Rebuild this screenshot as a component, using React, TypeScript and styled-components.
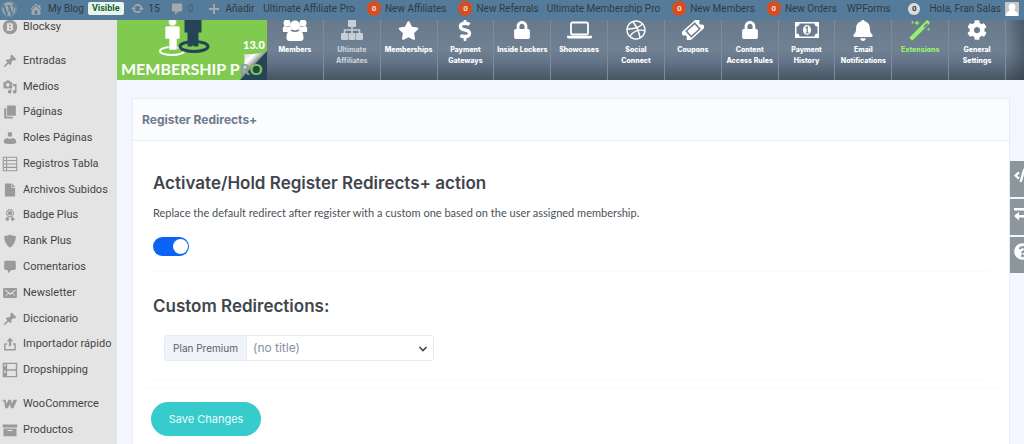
import React from "react";
import styled, { createGlobalStyle } from "styled-components";
import {
  FaBell, FaCog, FaCode, FaDollarSign, FaDribbble, FaLock,
  FaQuestionCircle, FaStar, FaWordpress,
} from "react-icons/fa";

const Global = createGlobalStyle`
  * { box-sizing: border-box; }
  html, body { margin: 0; background: #f3f6ff; }
  body { font-family: Roboto, "Liberation Sans", sans-serif; overflow: hidden; }
  a { color: inherit; text-decoration: none; }
  h1, h2, h3, p, ul { margin: 0; padding: 0; }
  ul { list-style: none; }
`;

const Bar = styled.header`
  position: relative;
  z-index: 1;
  display: flex;
  align-items: center;
  height: 20px;
  padding: 0 5px 3px 1px;
  background: #547c9a;
  color: #2f3a42;
  font-size: 10px;
  line-height: 16px;
  white-space: nowrap;
`;
const BarLink = styled.a<{ $gap: number }>`
  flex: none;
  display: flex;
  align-items: center;
  gap: 4px;
  margin-left: ${(p) => p.$gap}px;
  svg { color: #a3a9ad; }
`;
const Status = styled.span`
  margin-left: 4px;
  padding: 0 4px;
  border-radius: 2px;
  background: #e9f5ec;
  color: #17603a;
  font-size: 9px;
  font-weight: 700;
  line-height: 13px;
`;
const Count = styled.b<{ $grey?: boolean }>`
  width: ${(p) => (p.$grey ? 12 : 14)}px;
  border-radius: 8px;
  background: ${(p) => (p.$grey ? "#dcdcde" : "#d54e21")};
  color: ${(p) => (p.$grey ? "#333" : "#f3e3dc")};
  font-size: 8px;
  line-height: ${(p) => (p.$grey ? 12 : 15)}px;
  text-align: center;
`;
const Spacer = styled.span`flex: 1;`;
const Faded = styled.span`color: #49606f;`;

const Shell = styled.div`
  display: flex;
  align-items: stretch;
`;
const Side = styled.nav`
  flex: none;
  width: 117px;
  min-height: calc(100vh - 20px);
  background: #e4e4e4;
  color: #444;
  font-size: 11px;
  line-height: 14px;
`;
const Group = styled.ul<{ $height: number; $after: number }>`
  display: flex;
  flex-direction: column;
  height: ${(p) => p.$height}px;
  margin-bottom: ${(p) => p.$after}px;
`;
const SideItem = styled.li`
  flex: 1;
  display: flex;
  align-items: center;
  min-height: 0;
  a {
    display: flex;
    align-items: center;
    gap: 5px;
    padding-left: 2px;
    white-space: nowrap;
  }
  svg { color: #989a9c; }
`;

const Main = styled.div`
  flex: 1;
  min-width: 0;
  position: relative;
`;
const Top = styled.div`
  display: flex;
  height: 60px;
  padding-right: 18px;
  background:
    linear-gradient(90deg, transparent calc(100% - 18px), rgba(40, 50, 60, 0.45)),
    linear-gradient(#68798b 0, #708193 50%, #65758a 68%, #485461 100%);
`;
const Tab = styled.a<{ $tone: string }>`
  flex: 1 1 0;
  min-width: 0;
  display: flex;
  flex-direction: column;
  align-items: center;
  border-right: 1px solid #7d8c9b;
  color: ${(p) => p.$tone};
  font-family: Inter, sans-serif;
  font-size: 7px;
  font-weight: 800;
  line-height: 11px;
  text-align: center;
  white-space: pre;
`;
const IconBox = styled.span`
  display: flex;
  align-items: center;
  height: 20px;
  margin-bottom: 4px;
`;

const Panel = styled.section`
  margin: 18px 14px 0 15px;
  border: 1px solid #e9ecf3;
  border-bottom: 0;
  background: #fff;
  font-family: Inter, "Open Sans", sans-serif;
  min-height: calc(100vh - 98px);
`;
const PanelTitle = styled.h3`
  padding: 0 9px;
  border-bottom: 1px solid #e2ebfd;
  background: #fbfcfe;
  color: #6c7a8d;
  font-size: 12px;
  font-weight: 700;
  line-height: 41px;
`;
const Block = styled.div<{ $top: number }>`
  margin: 0 18px;
  padding: ${(p) => p.$top}px 2px 14px;
  border-bottom: 1px solid #fafafa;
`;
const Heading = styled.h2`
  color: #3f464d;
  font-size: 17px;
  font-weight: 600;
  line-height: 24px;
`;
const Text = styled.p`
  margin-top: 10px;
  color: #4b5157;
  font-family: Lato, sans-serif;
  font-size: 11px;
  line-height: 16px;
`;
const Switch = styled.input`
  appearance: none;
  display: block;
  width: 36px;
  height: 19px;
  margin: 16px 0 1px;
  padding: 2px 1px;
  border-radius: 10px;
  background: #0b63f6;
  &::before {
    content: "";
    display: block;
    width: 15px;
    height: 15px;
    margin-left: auto;
    border-radius: 50%;
    background: #fff;
  }
`;
const Field = styled.div`
  display: flex;
  width: 270px;
  height: 26px;
  margin: 17px 0 4px 11px;
  border: 1px solid #e1eaf9;
  border-radius: 3px;
  overflow: hidden;
  position: relative;
  svg { position: absolute; right: 5px; top: 8px; pointer-events: none; }
`;
const Label = styled.label`
  flex: none;
  width: 82px;
  border-right: 1px solid #e1eaf9;
  background: #f0f3f9;
  color: #5b6066;
  font-size: 10px;
  line-height: 24px;
  text-align: center;
`;
const Select = styled.select`
  appearance: none;
  flex: 1;
  min-width: 0;
  padding: 0 6px;
  border: 0;
  background: #fff;
  color: #8790a2;
  font: 12px/24px Inter, sans-serif;
`;
const Save = styled.button`
  display: block;
  width: 110px;
  height: 34px;
  margin: 13px 0 0 18px;
  padding: 0;
  border: 0;
  border-radius: 17px;
  background: #38cbcb;
  color: #e9fbfb;
  font: 11px/34px Inter, sans-serif;
`;
const Rule = styled.hr`
  margin: 8px 8px 0;
  border: 0;
  border-top: 1px solid #fafafa;
`;
const Tools = styled.div`
  position: absolute;
  top: 141px;
  right: 0;
  width: 14px;
  display: grid;
  gap: 2px;
`;
const Tool = styled.button`
  display: flex;
  height: 36px;
  padding: 6px 0 0 4px;
  border: 0;
  overflow: hidden;
  background: #8b979c;
  color: #fff;
  svg { flex: none; }
`;

const paths = {
  pin: "M10.44 3.02l1.82-1.82 6.36 6.35-1.83 1.82c-1.05-.68-2.48-.57-3.41.36l-.75.75c-.92.93-1.04 2.35-.35 3.41l-1.83 1.82-2.41-2.41-2.8 2.79c-.42.42-3.38 2.71-3.8 2.29s1.86-3.39 2.28-3.81l2.79-2.79L4.1 9.36l1.83-1.82c1.05.69 2.48.57 3.4-.36l.75-.75c.93-.92 1.05-2.35.36-3.41z",
  media: "M13 11V4c0-.55-.45-1-1-1h-1.67L9 1H5L3.67 3H2c-.55 0-1 .45-1 1v7c0 .55.45 1 1 1h10c.55 0 1-.45 1-1zM7 4.5c1.38 0 2.5 1.12 2.5 2.5S8.38 9.5 7 9.5 4.5 8.38 4.5 7 5.62 4.5 7 4.5zM14 6h5v10.5c0 1.38-1.12 2.5-2.5 2.5S14 17.88 14 16.5s1.12-2.5 2.5-2.5c.17 0 .34.02.5.05V9h-3V6zm-4 8.05V13h2v3.5c0 1.38-1.12 2.5-2.5 2.5S7 17.88 7 16.5 8.12 14 9.5 14c.17 0 .34.02.5.05z",
  pages: "M6 15V1h12v14H6zm-1 1.500h9V19H2V5h3v11z",
  person: "M10 8.5a3.2 3.4 0 1 1 0-6.8 3.2 3.4 0 0 1 0 6.8zM6 10l4 1.5L14 10c2.4.5 4.5 2.2 4.5 4.5V17c-2.500 1-5.500 1.300-8.500 1.300S4 18 1.500 17v-2.500C1.500 12.200 3.600 10.500 6 10z",
  table: "M0 0h20v20H0zM1.500 1.500v3h3v-3zm4.500 0v3h12.500v-3zM1.500 6v3.200h3V6zM6 6v3.200h12.500V6zm-4.500 4.700v3.200h3v-3.200zm4.500 0v3.200h12.500v-3.200zm-4.500 4.700v3.100h3v-3.100zm4.500 0v3.100h12.500v-3.100z",
  file: "M3 1h9v6h5v12H3zM13 1l4 5h-4z",
  award: "M4.46 5.16L5 7.46l-.54 2.29 2.01 1.24L7.7 13l2.3-.54 2.3.54 1.23-2.01 2.01-1.24L15 7.46l.54-2.3-2-1.24-1.24-2.01-2.3.55-2.29-.54-1.25 2zm5.55 6.34C7.79 11.5 6 9.71 6 7.49c0-2.2 1.79-3.99 4.01-3.99 2.2 0 3.99 1.79 3.99 3.99 0 2.22-1.79 4.01-3.99 4.01zm-.02-1C8.33 10.5 7 9.16 7 7.5c0-1.65 1.33-3 2.99-3S13 5.85 13 7.5c0 1.66-1.35 3-3.01 3zm3.84 1.1l-1.28 2.24-2.08-.47L13 19.2l1.4-2.2h2.5zm-7.7.07l1.25 2.25 2.13-.51L7 19.2 5.6 17H3.1z",
  shield: "M10 1s3 2 8 2c0 12-8 16-8 16S2 15 2 3c5 0 8-2 8-2z",
  comment: "M4 1.500h12c1.100 0 2 .9 2 2v8.500c0 1.100-.9 2-2 2h-4l-5 5v-5H4c-1.100 0-2-.9-2-2V3.500c0-1.100.9-2 2-2z",
  mail: "M19.500 15.500v-11c0-.83-.67-1.500-1.500-1.500H2C1.200 3 .5 3.670.5 4.500v11c0 .83.7 1.500 1.500 1.500h16c.83 0 1.500-.67 1.500-1.500zM17.690 5.390c.33.33.15.67-.03.84L13.600 9.950l3.900 4.060c.12.14.2.36.06.51-.13.16-.43.15-.56.05l-4.370-3.730-2.140 1.950-2.130-1.950-4.370 3.730c-.13.1-.43.11-.56-.05-.14-.15-.06-.37.06-.51l3.900-4.060-4.060-3.720c-.18-.17-.36-.51-.03-.84s.67-.17.95.07l6.240 5.040 6.250-5.040c.28-.24.62-.4.95-.07z",
  upload: "M8.500 13V6.500H5.500L10 1l4.500 5.500h-3V13zM2 9h4v2H4v6h12v-6h-2V9h4v10H2z",
  server: "M0 0h20v20H0zM6 1.800v7.200h12V1.800zM6 11v7.200h12V11zM2 2v3h2V2zm0 9v3h2v-3z",
  woo: "M0 4h4l.8 6L8 4h3.500l.7 6L15 4h5l-5.500 12h-3.300L10 10.500 7 16H3.500L2 6.500H0z",
  box: "M0 2.500h20v4H0zM1 8h18v10.500H1zm12.500 3.500V10h-7v1.500z",
  blocksy: "M10 0a10 10 0 1 0 0 20 10 10 0 0 0 0-20zM6 5h5c3.500 0 4 3.800 2 5 2.500 1.500 1.500 5-2 5H6l-1-1.500h1zm2.500 2v2h2.300c1 0 1-2 0-2zm0 4v2.200h2.500c1.100 0 1.100-2.200 0-2.200z",
  home: "M16 8.500l1.530 1.530-1.060 1.060L10 4.600l-6.470 6.490-1.060-1.060L10 2.500l4 4v-2h2v4zm-6-2.460l6 5.990V18H4v-5.970zM12 17v-5H8v5h4z",
  update: "M10.200 3.280c3.530 0 6.430 2.610 6.920 6h2.080l-3.500 4-3.500-4h2.320c-.45-1.970-2.210-3.450-4.320-3.450-1.450 0-2.730.71-3.540 1.780L4.950 5.660C6.230 4.200 8.110 3.280 10.200 3.280zm-.4 13.440c-3.520 0-6.430-2.610-6.920-6H.8l3.500-4c1.170 1.330 2.330 2.670 3.500 4H5.480c.45 1.970 2.210 3.450 4.320 3.450 1.450 0 2.730-.71 3.540-1.780l1.710 1.950c-1.280 1.460-3.150 2.380-5.250 2.380z",
  plus: "M8.500 2h3v6.500H18v3h-6.500V18h-3v-6.500H2v-3h6.500z",
};
const Glyph = ({ name, size = 16 }: { name: keyof typeof paths; size?: number }) => (
  <svg width={size} height={size} viewBox="-1 -1 22 22" fill="currentColor" aria-hidden="true">
    <path fillRule="evenodd" d={paths[name]} />
  </svg>
);

const Users = () => (
  <svg width="26" height="24" viewBox="0 0 26 24" fill="#fff" aria-hidden="true">
    <circle cx="5" cy="5" r="3.500" />
    <circle cx="21" cy="5" r="3.500" />
    <path d="M1 14q-1-6 2-6 3 2 5 0 .3 2 2 4-2 0-3 2zM25 14q1-6-2-6-3 2-5 0-.3 2-2 4 2 0 3 2z" />
    <circle cx="13" cy="7.500" r="5" />
    <path d="M8.500 12.500q4.500 3 9 0c3 0 4 4 4 7.500 0 2-1.300 3-3 3h-11c-1.700 0-3-1-3-3 0-3.500 1-7.500 4-7.500z" />
  </svg>
);
const Sitemap = () => (
  <svg width="24" height="20" viewBox="0 0 24 20" fill="currentColor" aria-hidden="true">
    <rect x="8" y="0" width="8" height="7" rx="1" />
    <rect x="1" y="13" width="7" height="7" rx="1" />
    <rect x="8.500" y="13" width="7" height="7" rx="1" />
    <rect x="16" y="13" width="7" height="7" rx="1" />
    <path d="M12 7v6M4.500 13v-3h15v3" fill="none" stroke="currentColor" strokeWidth="1.500" />
  </svg>
);
const Laptop = () => (
  <svg width="25" height="20" viewBox="0 0 25 20" fill="none" aria-hidden="true">
    <rect x="4" y="2.500" width="17" height="12" rx="1.500" stroke="#fff" strokeWidth="1.800" />
    <path fill="#fff" d="M0 15.800h25v1.200q0 1.500-2 1.500H2q-2 0-2-1.500z" />
  </svg>
);
const Wand = () => (
  <svg width="22" height="22" viewBox="0 0 22 22" fill="currentColor" aria-hidden="true">
    <path fillRule="evenodd" d="M1 18L17.500 1.500q.8-.8 1.600 0l1.400 1.400q.8.800 0 1.600L4 21q-.8.800-1.600 0L1 19.600q-.8-.8 0-1.600zM14.500 7.300l1.200 1.200 3.300-3.300-1.200-1.200z" />
    <path d="M8 1l.8 2.200L11 4l-2.200.8L8 7l-.8-2.200L5 4l2.200-.8zM3.500 1.500l.5 1.300 1.300.5-1.300.5-.5 1.300-.5-1.300-1.300-.5L3 2.800zM19.500 8.500l.5 1.300 1.300.5-1.300.5-.5 1.300-.5-1.300-1.300-.5 1.300-.5z" />
  </svg>
);
const Swap = () => (
  <svg width="17" height="16" viewBox="0 0 17 16" fill="#fff" aria-hidden="true">
    <path d="M0 3h12V0l5 4.500L12 8V5.500H0zM17 10H5V7L0 11l5 4.500V12.500h12z" />
  </svg>
);
const Ticket = () => (
  <svg width="22" height="20" viewBox="0 0 22 20" aria-hidden="true">
    <g transform="rotate(-42 11 10)">
      <path fill="#fff" fillRule="evenodd" d="M0 4h22v4a2 2 0 0 0 0 4v4H0v-4a2 2 0 0 0 0-4zm4.500 1.500v9h13v-9z" />
      <path fill="#fff" d="M6 7h10v6H6z" />
    </g>
  </svg>
);
const Bill = () => (
  <svg width="26" height="20" viewBox="0 0 26 20" aria-hidden="true">
    <path fill="#fff" fillRule="evenodd" d="M1 2h24v16H1zm4.500 1.500a3 3 0 0 1-3 3v7a3 3 0 0 1 3 3h15a3 3 0 0 1 3-3v-7a3 3 0 0 1-3-3z" />
    <ellipse cx="13" cy="10" rx="4" ry="5" fill="#fff" />
    <path d="M11.500 8l1.700-1.200V13M11.500 13h3.400" stroke="#6b7c8e" strokeWidth="1.200" fill="none" />
  </svg>
);

const Logo = () => (
  <svg width="150" height="60" viewBox="0 0 150 60" role="img" aria-label="Membership Pro 13.0">
    <defs>
      <linearGradient id="curl" gradientUnits="userSpaceOnUse" x1="126" y1="35" x2="138" y2="47">
        <stop offset="0" stopColor="#d3d6d4" />
        <stop offset="0.450" stopColor="#fff" />
        <stop offset="0.800" stopColor="#9a9c9c" />
        <stop offset="1" stopColor="#2e3234" />
      </linearGradient>
    </defs>
    <rect width="150" height="60" fill="#80cb4f" />
    <ellipse cx="55" cy="31" rx="12" ry="4" fill="none" stroke="#fff" strokeWidth="2" />
    <ellipse cx="77" cy="26.500" rx="14" ry="5" fill="#80cb4f" stroke="#264457" strokeWidth="3" />
    <g fill="#fff" stroke="#80cb4f" strokeWidth="0.600">
      <path d="M48 8q0-2 2-2h11q2 0 2 2v11h-3v11h-8V19h-4z" />
      <circle cx="55.500" cy="2" r="4" />
    </g>
    <path d="M67.500 0h17v12.500h-3v14h-4.500l-1-1.500-1 1.500h-4.500v-14h-3z" fill="#264457" />
    <path d="M150 31v29h-27z" fill="#264457" />
    <path d="M127 34q12 1 23-3l-27 28q6-11 4-25z" fill="url(#curl)" />
    <text x="126" y="29" fill="#fff" fontFamily="Lato, sans-serif" fontSize="11" fontWeight="900">13.0</text>
    <text x="4" y="55" fill="#fff" fontFamily="Lato, sans-serif" fontSize="16" fontWeight="700">
      MEMBERSHIP P<tspan fill="#8da39a">R</tspan><tspan fill="#80cb4f">O</tspan>
    </text>
  </svg>
);

type Entry = [keyof typeof paths, string];
const first: Entry[] = [["blocksy", "Blocksy"]];
const middle: Entry[] = [
  ["pin", "Entradas"], ["media", "Medios"], ["pages", "Páginas"], ["person", "Roles Páginas"],
  ["table", "Registros Tabla"], ["file", "Archivos Subidos"], ["award", "Badge Plus"],
  ["shield", "Rank Plus"], ["comment", "Comentarios"], ["mail", "Newsletter"],
  ["pin", "Diccionario"], ["upload", "Importador rápido"], ["server", "Dropshipping"],
];
const last: Entry[] = [["woo", "WooCommerce"], ["box", "Productos"]];
const groups = [
  { items: first, height: 13, after: 15 },
  { items: middle, height: 335, after: 8 },
  { items: last, height: 52, after: 0 },
];

const tabs: [React.ReactNode, string, string?][] = [
  [<Users />, "Members"],
  [<Sitemap />, "Ultimate\nAffiliates", "#c8ced5"],
  [<FaStar size={21} />, "Memberships"],
  [<FaDollarSign size={22} />, "Payment\nGateways"],
  [<FaLock size={18} />, "Inside Lockers"],
  [<Laptop />, "Showcases"],
  [<FaDribbble size={20} />, "Social\nConnect"],
  [<Ticket />, "Coupons"],
  [<FaLock size={18} />, "Content\nAccess Rules"],
  [<Bill />, "Payment\nHistory"],
  [<FaBell size={22} />, "Email\nNotifications"],
  [<Wand />, "Extensions", "#97f06d"],
  [<FaCog size={20} />, "General\nSettings"],
];

export default function App() {
  return (
    <>
      <Global />
      <Bar>
        <BarLink href="#" $gap={0} aria-label="WordPress"><FaWordpress size={16} /></BarLink>
        <BarLink href="#" $gap={11}><Glyph name="home" />My Blog</BarLink>
        <Status>Visible</Status>
        <BarLink href="#" $gap={6}><Glyph name="update" size={15} />15</BarLink>
        <BarLink href="#" $gap={10}><Glyph name="comment" size={14} /><Faded>0</Faded></BarLink>
        <BarLink href="#" $gap={14}><Glyph name="plus" size={14} />Añadir</BarLink>
        <BarLink href="#" $gap={9}>Ultimate Affiliate Pro</BarLink>
        <BarLink href="#" $gap={12}><Count>0</Count>New Affiliates</BarLink>
        <BarLink href="#" $gap={12}><Count>0</Count>New Referrals</BarLink>
        <BarLink href="#" $gap={8}>Ultimate Membership Pro</BarLink>
        <BarLink href="#" $gap={12}><Count>0</Count>New Members</BarLink>
        <BarLink href="#" $gap={12}><Count>0</Count>New Orders</BarLink>
        <BarLink href="#" $gap={10}>WPForms</BarLink>
        <Spacer />
        <BarLink href="#" $gap={0} aria-label="Notifications"><Count $grey>0</Count></BarLink>
        <BarLink href="#" $gap={9}>
          Hola, Fran Salas
          <svg width="14" height="14" viewBox="0 0 14 14" aria-hidden="true">
            <rect width="14" height="14" fill="#c6c6c6" />
            <path fill="#fff" d="M7 1.500c5 0 3.500 6 2 7.300 2.500.7 4 1.700 4 5.200H1c0-3.500 1.500-4.500 4-5.200-1.500-1.300-3-7.300 2-7.300z" />
          </svg>
        </BarLink>
      </Bar>
      <Shell>
        <Side>
          {groups.map((g) => (
            <Group key={g.height} $height={g.height} $after={g.after}>
              {g.items.map(([icon, label]) => (
                <SideItem key={label}><a href="#"><Glyph name={icon} />{label}</a></SideItem>
              ))}
            </Group>
          ))}
        </Side>
        <Main>
          <Top>
            <Logo />
            {tabs.map(([icon, label, tone]) => (
              <Tab key={label} href="#" $tone={tone ?? "#fff"}><IconBox>{icon}</IconBox>{label}</Tab>
            ))}
          </Top>
          <Panel>
            <PanelTitle>Register Redirects+</PanelTitle>
            <Block $top={30}>
              <Heading>Activate/Hold Register Redirects+ action</Heading>
              <Text>Replace the default redirect after register with a custom one based on the user assigned membership.</Text>
              <Switch type="checkbox" role="switch" defaultChecked aria-label="Activate Register Redirects+" />
            </Block>
            <Block $top={22}>
              <Heading>Custom Redirections:</Heading>
              <Field>
                <Label htmlFor="plan">Plan Premium</Label>
                <Select id="plan"><option>(no title)</option></Select>
                <svg width="10" height="10" viewBox="0 0 10 10" aria-hidden="true">
                  <path d="M1.500 3L5 6.500 8.500 3" fill="none" stroke="#3f464d" strokeWidth="1.600" />
                </svg>
              </Field>
            </Block>
            <Rule />
            <Save type="button">Save Changes</Save>
          </Panel>
          <Tools>
            <Tool type="button" aria-label="Shortcodes"><FaCode size={17} /></Tool>
            <Tool type="button" aria-label="Transfer"><Swap /></Tool>
            <Tool type="button" aria-label="Help"><FaQuestionCircle size={17} /></Tool>
          </Tools>
        </Main>
      </Shell>
    </>
  );
}
